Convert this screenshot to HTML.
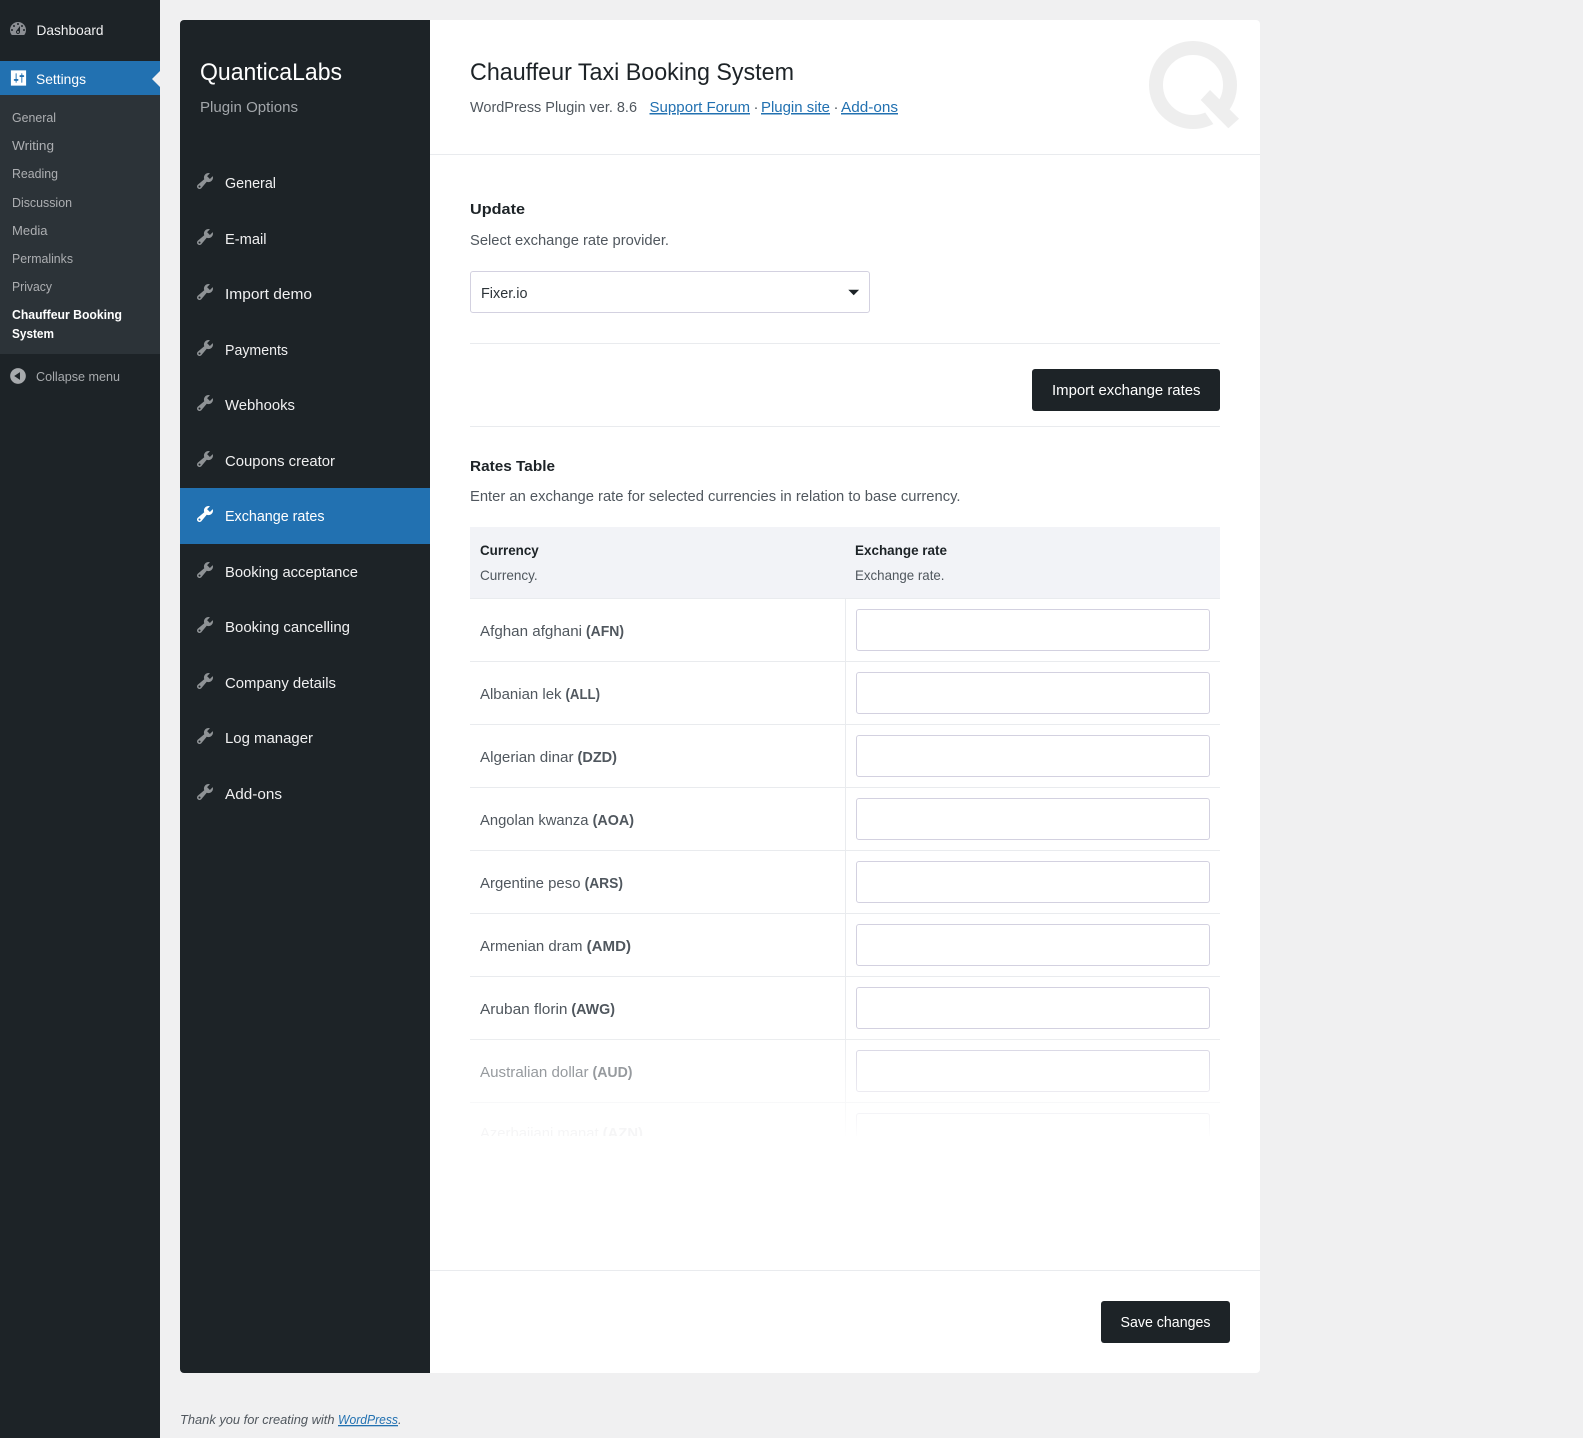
<!DOCTYPE html>
<html lang="en"><head><meta charset="utf-8"><title>Exchange rates</title>
<style>
html,body{margin:0;padding:0;width:1583px;height:1438px;overflow:hidden;background:#f0f0f1;font-family:"Liberation Sans",sans-serif}
.a{position:absolute;display:block;box-sizing:border-box}
input.a,select.a{margin:0;padding:0;background:#fff;border:1px solid #d3d1e0;border-radius:3px;outline:0}
.ln{background:#e9ebee;height:1px}
.b{background:#1d2327;border-radius:3px}
svg text{font-family:"Liberation Sans",sans-serif}
</style></head><body>
<div class="a" style="left:0;top:0;width:160px;height:1438px;background:#1d2327"></div>
<div class="a" style="left:0;top:61px;width:160px;height:34px;background:#2271b1"></div>
<div class="a" style="left:0;top:95px;width:160px;height:259px;background:#2c3338"></div>
<div class="a" style="left:180px;top:20px;width:1080px;height:1353px;background:#fff;border-radius:4px"></div>
<div class="a" style="left:180px;top:20px;width:250px;height:1353px;background:#1d2327;border-radius:4px 0 0 4px"></div>
<div class="a" style="left:180px;top:488px;width:250px;height:56px;background:#2271b1"></div>
<div class="a ln" style="left:430px;top:154px;width:830px"></div>
<div class="a ln" style="left:470px;top:343px;width:750px"></div>
<div class="a ln" style="left:470px;top:426px;width:750px"></div>
<div class="a ln" style="left:430px;top:1270px;width:830px"></div>
<div class="a" style="left:470px;top:271px;width:400px;height:42px;border:1px solid #d3d1e0;border-radius:3px"></div>
<div class="a b" style="left:1032px;top:369px;width:188px;height:42px"></div>
<div class="a b" style="left:1101px;top:1301px;width:129px;height:42px"></div>
<div class="a" style="left:470px;top:527px;width:750px;height:71px;background:#f2f3f7"></div>
<div class="a" style="left:845px;top:598px;width:1px;height:542px;background:#e9ebee"></div>
<div class="a ln" style="left:470px;top:598px;width:750px"></div>
<div class="a ln" style="left:470px;top:661px;width:750px"></div>
<div class="a ln" style="left:470px;top:724px;width:750px"></div>
<div class="a ln" style="left:470px;top:787px;width:750px"></div>
<div class="a ln" style="left:470px;top:850px;width:750px"></div>
<div class="a ln" style="left:470px;top:913px;width:750px"></div>
<div class="a ln" style="left:470px;top:976px;width:750px"></div>
<div class="a ln" style="left:470px;top:1039px;width:750px"></div>
<div class="a ln" style="left:470px;top:1102px;width:750px"></div>
<input class="a" style="left:856px;top:609px;width:354px;height:42px">
<input class="a" style="left:856px;top:672px;width:354px;height:42px">
<input class="a" style="left:856px;top:735px;width:354px;height:42px">
<input class="a" style="left:856px;top:798px;width:354px;height:42px">
<input class="a" style="left:856px;top:861px;width:354px;height:42px">
<input class="a" style="left:856px;top:924px;width:354px;height:42px">
<input class="a" style="left:856px;top:987px;width:354px;height:42px">
<input class="a" style="left:856px;top:1050px;width:354px;height:42px">
<input class="a" style="left:856px;top:1113px;width:354px;height:42px">

<svg class="a" style="left:0;top:0" width="1583" height="1438" viewBox="0 0 1583 1438">
<defs>
<linearGradient id="f" x1="0" y1="0" x2="0" y2="1"><stop offset="0" stop-color="#fff" stop-opacity="0"/><stop offset="1" stop-color="#fff"/></linearGradient>
<path id="w" d="M16.68 9.77c-1.34 1.34-3.3 1.67-4.95.99l-5.41 6.52c-.99.99-2.59.99-3.58 0s-.99-2.59 0-3.58l6.52-5.41c-.68-1.65-.35-3.61.99-4.95 1.28-1.28 3.12-1.62 4.72-1.06l-2.89 2.89 2.82 2.82 2.86-2.87c.53 1.58.18 3.39-1.08 4.65zM3.81 16.21c.4.39 1.04.39 1.43 0 .4-.4.4-1.04 0-1.43-.39-.4-1.03-.4-1.43 0-.39.39-.39 1.03 0 1.43z"/>
</defs>
<!-- fade over table rows -->
<rect x="470" y="1030" width="750" height="110" fill="url(#f)"/>
<rect x="470" y="1136" width="750" height="133" fill="#fff"/>

<!-- admin sidebar icons -->
<path transform="translate(8 19)" fill="#8c8f94" d="M3.76 16h12.48c1.1-1.37 1.76-3.11 1.76-5 0-4.42-3.58-8-8-8s-8 3.58-8 8c0 1.89.66 3.63 1.76 5zM10 4c.55 0 1 .45 1 1s-.45 1-1 1-1-.45-1-1 .45-1 1-1zM6 6c.55 0 1 .45 1 1s-.45 1-1 1-1-.45-1-1 .45-1 1-1zm8 0c.55 0 1 .45 1 1s-.45 1-1 1-1-.45-1-1 .45-1 1-1zm-5.37 5.55L12 7v6c0 1.1-.9 2-2 2s-2-.9-2-2c0-.57.24-1.08.63-1.45zM4 10c.55 0 1 .45 1 1s-.45 1-1 1-1-.45-1-1 .45-1 1-1zm12 0c.55 0 1 .45 1 1s-.45 1-1 1-1-.45-1-1 .45-1 1-1zm-5 3c0-.55-.45-1-1-1s-1 .45-1 1 .45 1 1 1 1-.45 1-1z"/>
<path transform="translate(9 68.500) scale(.95)" fill="#fff" d="M18 16V2H2v16h16zM8 11h1c.55 0 1 .45 1 1s-.45 1-1 1H8v1.500c0 .28-.22.5-.5.5s-.5-.22-.5-.5V13H6c-.55 0-1-.45-1-1s.45-1 1-1h1V5.500c0-.28.22-.5.5-.5s.5.22.5.5V11zm5-2h-1c-.55 0-1-.45-1-1s.45-1 1-1h1V5.500c0-.28.22-.5.5-.5s.5.22.5.5V7h1c.55 0 1 .45 1 1s-.45 1-1 1h-1v5.500c0 .28-.22.5-.5.5s-.5-.22-.5-.5V9z"/>
<path fill="#f0f0f1" d="M160 71l-8 8 8 8z"/>
<path transform="translate(8 366)" fill="#a7aaad" fill-rule="evenodd" d="M10 2.160c4.330 0 7.840 3.510 7.840 7.840s-3.510 7.840-7.840 7.840S2.160 14.330 2.160 10 5.710 2.160 10 2.160zM12 13.880V6.120L6.180 9.970z"/>

<!-- admin sidebar text -->
<g font-size="14" fill="#f0f0f1">
<text x="36.500" y="35" textLength="67" lengthAdjust="spacingAndGlyphs">Dashboard</text>
<text x="36" y="84" textLength="50" lengthAdjust="spacingAndGlyphs" fill="#fff">Settings</text>
</g>
<g font-size="13" fill="#c3c4c7" fill-opacity=".85">
<text x="12" y="122" textLength="44" lengthAdjust="spacingAndGlyphs">General</text>
<text x="12" y="150" textLength="42" lengthAdjust="spacingAndGlyphs">Writing</text>
<text x="12" y="178" textLength="46" lengthAdjust="spacingAndGlyphs">Reading</text>
<text x="12" y="207" textLength="60" lengthAdjust="spacingAndGlyphs">Discussion</text>
<text x="12" y="235" textLength="35.500" lengthAdjust="spacingAndGlyphs">Media</text>
<text x="12" y="263" textLength="61" lengthAdjust="spacingAndGlyphs">Permalinks</text>
<text x="12" y="291" textLength="40" lengthAdjust="spacingAndGlyphs">Privacy</text>
</g>
<g font-size="13" font-weight="700" fill="#fff">
<text x="12" y="319" textLength="110" lengthAdjust="spacingAndGlyphs">Chauffeur Booking</text>
<text x="12" y="338" textLength="42" lengthAdjust="spacingAndGlyphs">System</text>
</g>
<text x="36" y="381" font-size="13" fill="#a7aaad" textLength="84" lengthAdjust="spacingAndGlyphs">Collapse menu</text>

<!-- plugin panel -->
<text x="200" y="80" font-size="24" fill="#fff" textLength="142" lengthAdjust="spacingAndGlyphs">QuanticaLabs</text>
<text x="200" y="112" font-size="15" fill="#a2a6aa" textLength="98" lengthAdjust="spacingAndGlyphs">Plugin Options</text>
<g fill="#8f9396">
<use href="#w" x="195" y="171"/><use href="#w" x="195" y="227"/><use href="#w" x="195" y="282"/><use href="#w" x="195" y="338"/><use href="#w" x="195" y="393"/><use href="#w" x="195" y="449"/><use href="#w" x="195" y="504" fill="#fff"/><use href="#w" x="195" y="560"/><use href="#w" x="195" y="615"/><use href="#w" x="195" y="671"/><use href="#w" x="195" y="726"/><use href="#w" x="195" y="782"/>
</g>
<g font-size="15" fill="#f0f0f1">
<text x="225" y="188" textLength="51" lengthAdjust="spacingAndGlyphs">General</text>
<text x="225" y="244" textLength="41.500" lengthAdjust="spacingAndGlyphs">E-mail</text>
<text x="225" y="299" textLength="87" lengthAdjust="spacingAndGlyphs">Import demo</text>
<text x="225" y="355" textLength="63" lengthAdjust="spacingAndGlyphs">Payments</text>
<text x="225" y="410" textLength="70" lengthAdjust="spacingAndGlyphs">Webhooks</text>
<text x="225" y="466" textLength="110" lengthAdjust="spacingAndGlyphs">Coupons creator</text>
<text x="225" y="521" textLength="99.500" lengthAdjust="spacingAndGlyphs" fill="#fff">Exchange rates</text>
<text x="225" y="577" textLength="133" lengthAdjust="spacingAndGlyphs">Booking acceptance</text>
<text x="225" y="632" textLength="125" lengthAdjust="spacingAndGlyphs">Booking cancelling</text>
<text x="225" y="688" textLength="111" lengthAdjust="spacingAndGlyphs">Company details</text>
<text x="225" y="743" textLength="88" lengthAdjust="spacingAndGlyphs">Log manager</text>
<text x="225" y="799" textLength="57" lengthAdjust="spacingAndGlyphs">Add-ons</text>
</g>

<!-- Q logo -->
<circle cx="1193" cy="85" r="37" fill="none" stroke="#eeeeee" stroke-width="14"/>
<path fill="#fff" d="M1200.700 100l27.600 28.300-7 6.700-17.300-24z"/>
<path fill="#eeeeee" d="M1210 90l29 28.700-10.700 9.600-27.600-28.300z"/>

<!-- header text -->
<text x="470" y="80" font-size="24" fill="#1d2327" textLength="324" lengthAdjust="spacingAndGlyphs">Chauffeur Taxi Booking System</text>
<g font-size="15">
<text x="470" y="112" fill="#50575e" textLength="167" lengthAdjust="spacingAndGlyphs">WordPress Plugin ver. 8.6</text>
<text x="649.500" y="112" fill="#2271b1" text-decoration="underline" textLength="100.500" lengthAdjust="spacingAndGlyphs">Support Forum</text>
<text x="753.500" y="112" fill="#50575e">·</text>
<text x="761" y="112" fill="#2271b1" text-decoration="underline" textLength="69" lengthAdjust="spacingAndGlyphs">Plugin site</text>
<text x="833.500" y="112" fill="#50575e">·</text>
<text x="841" y="112" fill="#2271b1" text-decoration="underline" textLength="57" lengthAdjust="spacingAndGlyphs">Add-ons</text>

<text x="470" y="214" font-weight="700" fill="#1d2327" textLength="55" lengthAdjust="spacingAndGlyphs">Update</text>
<text x="470" y="245" fill="#50575e" textLength="199" lengthAdjust="spacingAndGlyphs">Select exchange rate provider.</text>
<text x="481" y="298" fill="#2c3338" textLength="46.500" lengthAdjust="spacingAndGlyphs">Fixer.io</text>
<text x="1052" y="395" fill="#fff" textLength="148.500" lengthAdjust="spacingAndGlyphs">Import exchange rates</text>
<text x="470" y="471" font-weight="700" fill="#1d2327" textLength="85" lengthAdjust="spacingAndGlyphs">Rates Table</text>
<text x="470" y="501" fill="#50575e" textLength="490.500" lengthAdjust="spacingAndGlyphs">Enter an exchange rate for selected currencies in relation to base currency.</text>
<text x="1120.500" y="1327" fill="#fff" textLength="90" lengthAdjust="spacingAndGlyphs">Save changes</text>
</g>
<path d="M848.300 289.800h10.800l-5.400 5.400z" fill="#1d2327"/>

<!-- table text -->
<g font-size="14" font-weight="700" fill="#1d2327">
<text x="480" y="555" textLength="58.700" lengthAdjust="spacingAndGlyphs">Currency</text>
<text x="855" y="555" textLength="92" lengthAdjust="spacingAndGlyphs">Exchange rate</text>
</g>
<g font-size="14" fill="#50575e">
<text x="480" y="580" textLength="57.700" lengthAdjust="spacingAndGlyphs">Currency.</text>
<text x="855" y="580" textLength="89.500" lengthAdjust="spacingAndGlyphs">Exchange rate.</text>
</g>
<g font-size="15" fill="#50575e">
<text x="480" y="636" textLength="102" lengthAdjust="spacingAndGlyphs">Afghan afghani</text><text x="586" y="636" textLength="38" lengthAdjust="spacingAndGlyphs" font-weight="700">(AFN)</text>
<text x="480" y="699" textLength="81.500" lengthAdjust="spacingAndGlyphs">Albanian lek</text><text x="565.500" y="699" textLength="34.500" lengthAdjust="spacingAndGlyphs" font-weight="700">(ALL)</text>
<text x="480" y="762" textLength="93.500" lengthAdjust="spacingAndGlyphs">Algerian dinar</text><text x="577.500" y="762" textLength="39.500" lengthAdjust="spacingAndGlyphs" font-weight="700">(DZD)</text>
<text x="480" y="825" textLength="108.500" lengthAdjust="spacingAndGlyphs">Angolan kwanza</text><text x="592.600" y="825" textLength="41.400" lengthAdjust="spacingAndGlyphs" font-weight="700">(AOA)</text>
<text x="480" y="888" textLength="100.500" lengthAdjust="spacingAndGlyphs">Argentine peso</text><text x="584.600" y="888" textLength="38.400" lengthAdjust="spacingAndGlyphs" font-weight="700">(ARS)</text>
<text x="480" y="951" textLength="102.500" lengthAdjust="spacingAndGlyphs">Armenian dram</text><text x="586.600" y="951" textLength="44.400" lengthAdjust="spacingAndGlyphs" font-weight="700">(AMD)</text>
<text x="480" y="1014" textLength="87.500" lengthAdjust="spacingAndGlyphs">Aruban florin</text><text x="571.400" y="1014" textLength="43.600" lengthAdjust="spacingAndGlyphs" font-weight="700">(AWG)</text>
<g fill-opacity=".6"><text x="480" y="1077" textLength="108.500" lengthAdjust="spacingAndGlyphs">Australian dollar</text><text x="592.500" y="1077" textLength="40" lengthAdjust="spacingAndGlyphs" font-weight="700">(AUD)</text></g>
<g fill-opacity=".06"><text x="480" y="1138" textLength="163" lengthAdjust="spacingAndGlyphs">Azerbaijani manat <tspan font-weight="700">(AZN)</tspan></text></g>
</g>
<rect x="470" y="1136" width="750" height="10" fill="#fff"/>

<!-- footer -->
<g font-size="13" font-style="italic">
<text x="180" y="1424" fill="#50575e" textLength="154.500" lengthAdjust="spacingAndGlyphs">Thank you for creating with</text>
<text x="338" y="1424" fill="#2271b1" text-decoration="underline" textLength="60" lengthAdjust="spacingAndGlyphs">WordPress</text>
<text x="398" y="1424" fill="#50575e">.</text>
</g>
</svg>
</body></html>
